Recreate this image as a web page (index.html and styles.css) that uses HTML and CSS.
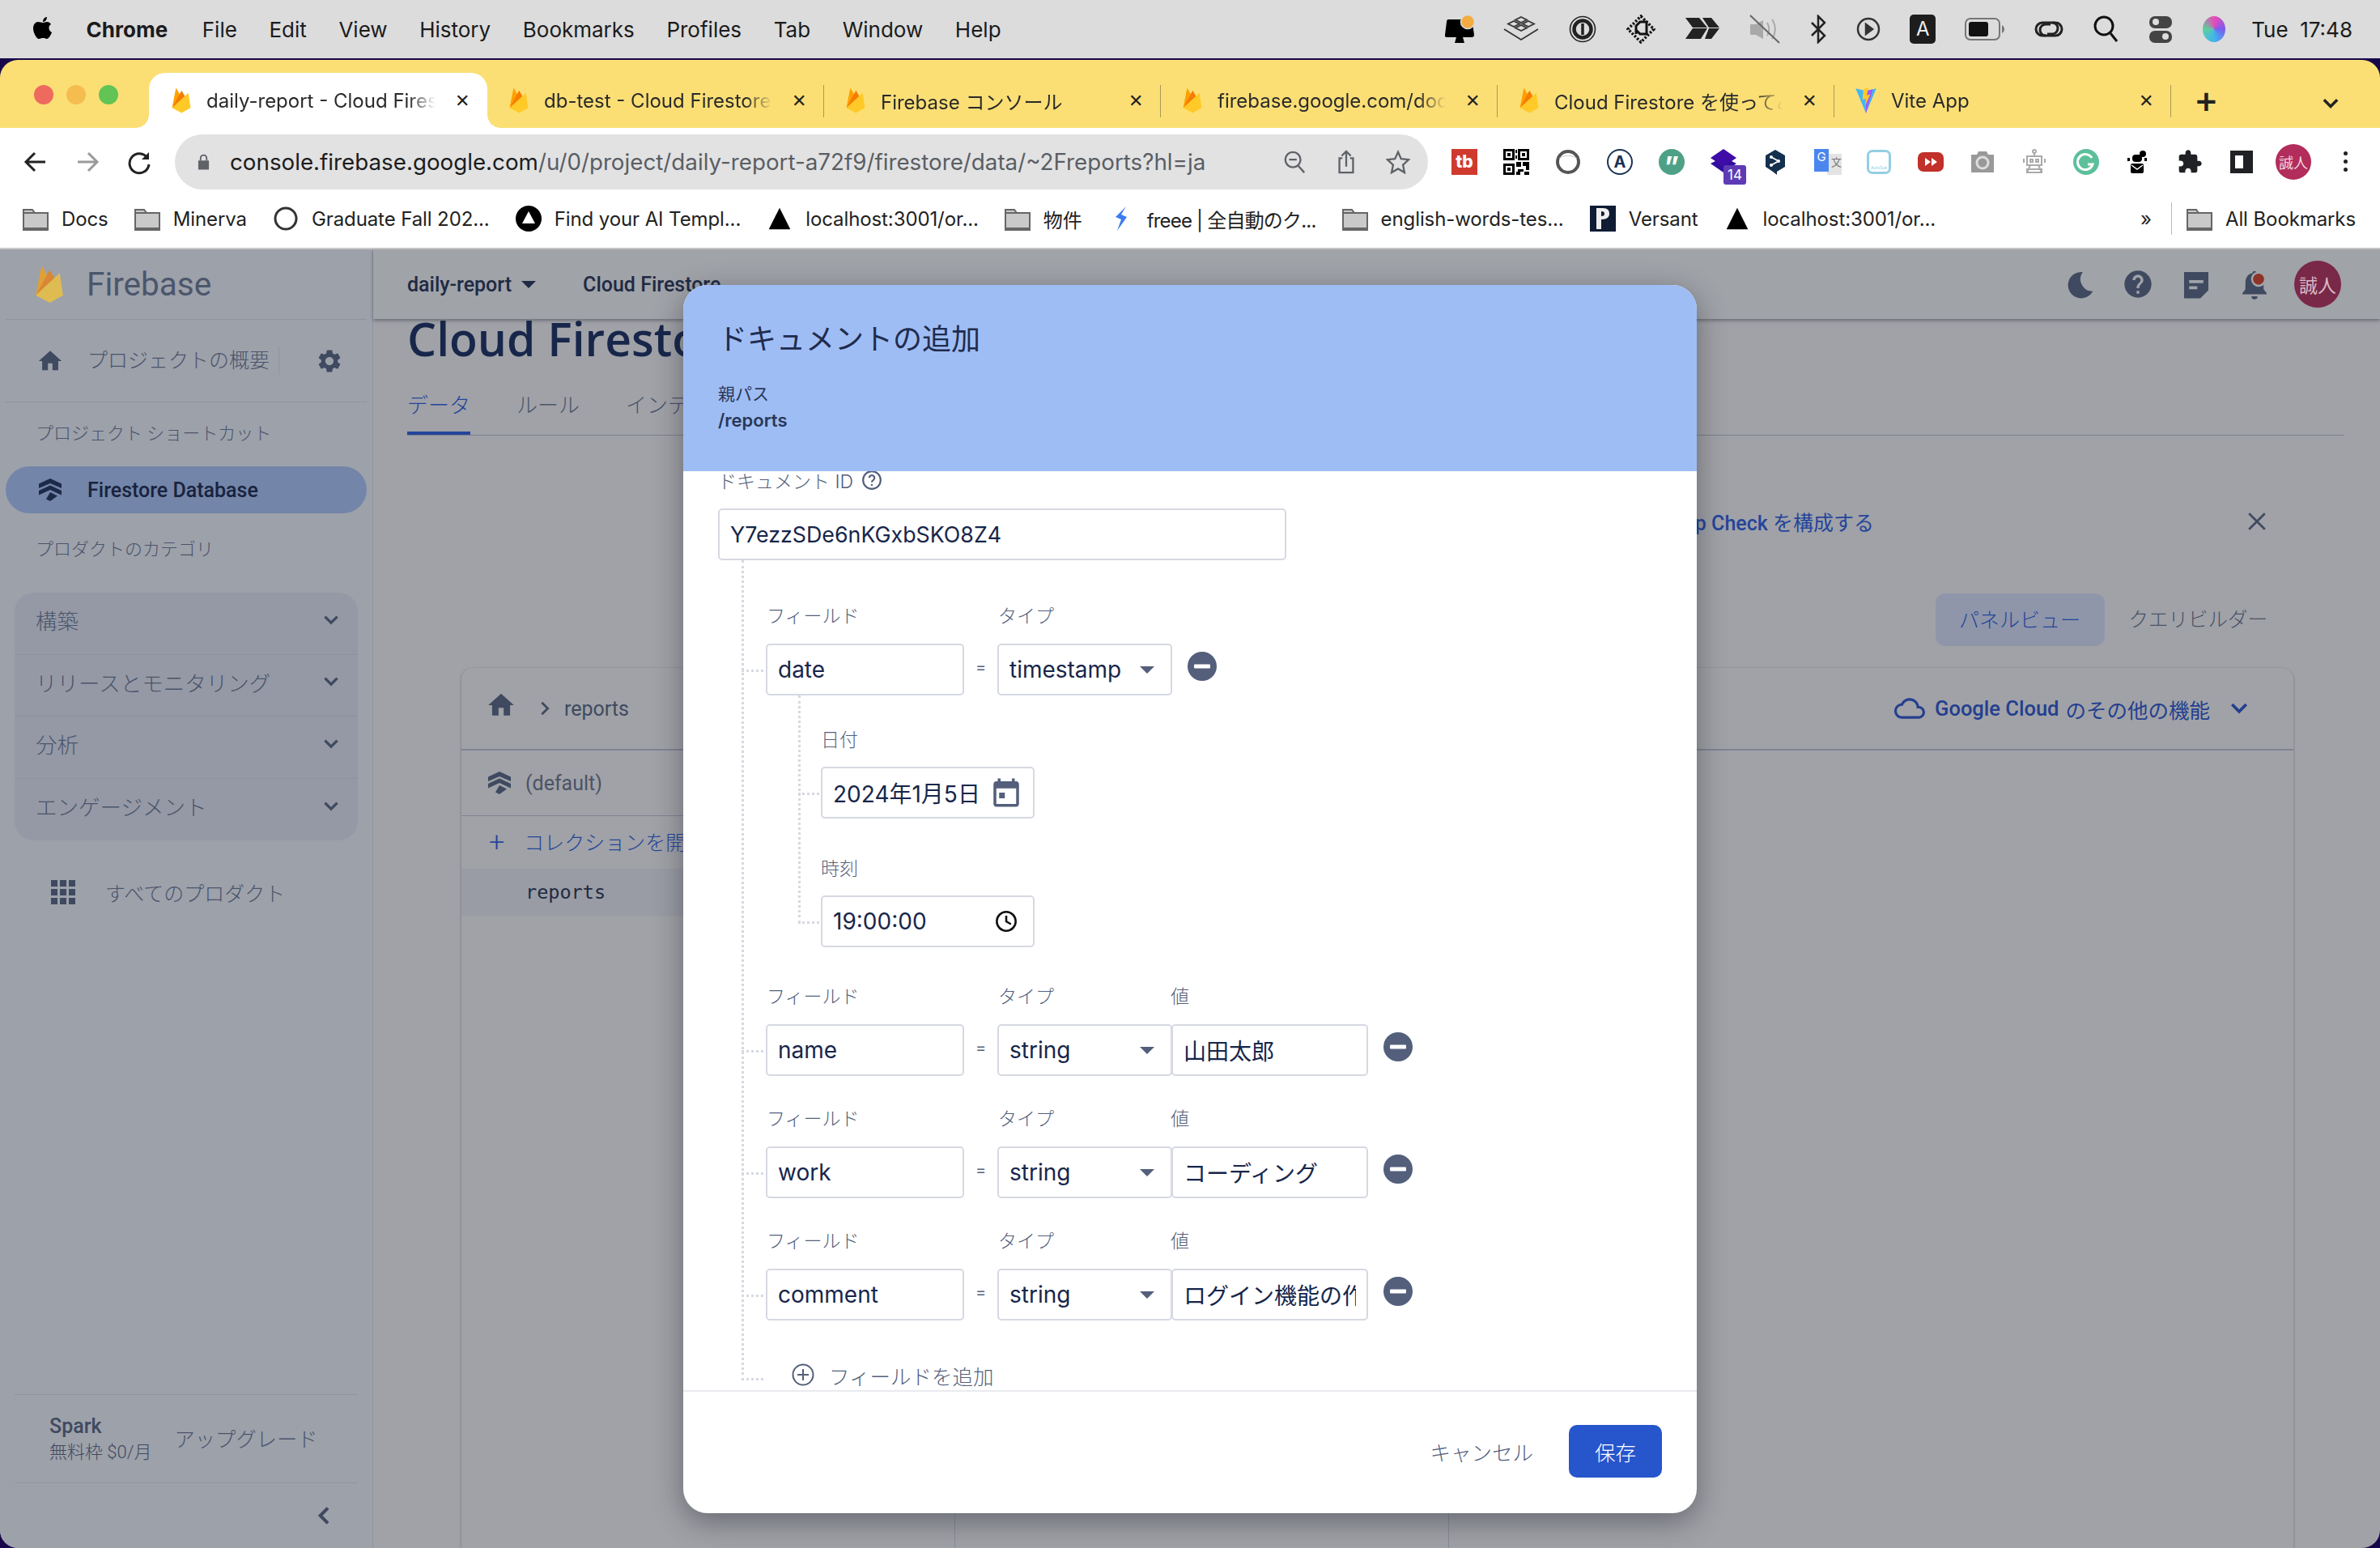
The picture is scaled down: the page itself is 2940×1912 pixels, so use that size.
FILE: index.html
```html
<!DOCTYPE html>
<html lang="ja">
<head>
    <meta charset="UTF-8">
    <title>Cloud Firestore</title>
    <link rel="stylesheet" href="styles.css">
</head>
<body>
<svg class="defs" width="0" height="0">
    <symbol id="flame" viewBox="12 10 37 49"><path fill="#ffa000" d="M14 48 21 12l8 14z"/><path fill="#f57c00" d="M14 48 31 17l8 14z"/><path fill="#ffca28" d="M14 48 43 21l4 27-16 9z"/></symbol>
    <symbol id="folder" viewBox="0 0 32 30"><path fill="#c9c9c9" stroke="#666" stroke-width="2" d="M1 4h11l3 4h16v21H1z"/><path fill="none" stroke="#666" stroke-width="2" d="M1 8h14"/><path fill="#666" d="M1 26h30v3H1z"/></symbol>
    <symbol id="home" viewBox="0 0 24 24"><path d="M10 20v-6h4v6h5v-8h3L12 3 2 12h3v8z"/></symbol>
    <symbol id="gear" viewBox="0 0 24 24"><path d="M19.14 12.94c.04-.3.06-.61.06-.94 0-.32-.02-.64-.07-.94l2.03-1.58c.18-.14.23-.41.12-.61l-1.92-3.32c-.12-.22-.37-.29-.59-.22l-2.39.96c-.5-.38-1.03-.7-1.62-.94l-.36-2.54c-.04-.24-.24-.41-.48-.41h-3.84c-.24 0-.43.17-.47.41l-.36 2.54c-.59.24-1.13.57-1.62.94l-2.39-.96c-.22-.08-.47 0-.59.22L2.74 8.87c-.12.21-.08.47.12.61l2.03 1.58c-.05.3-.09.63-.09.94s.02.64.07.94l-2.03 1.58c-.18.14-.23.41-.12.61l1.92 3.32c.12.22.37.29.59.22l2.39-.96c.5.38 1.03.7 1.62.94l.36 2.54c.05.24.24.41.48.41h3.84c.24 0 .44-.17.47-.41l.36-2.54c.59-.24 1.13-.56 1.62-.94l2.39.96c.22.08.47 0 .59-.22l1.92-3.32c.12-.22.07-.47-.12-.61l-2.01-1.58zM12 15.6c-1.98 0-3.6-1.62-3.6-3.6s1.62-3.6 3.6-3.6 3.6 1.62 3.6 3.6-1.62 3.6-3.6 3.6z"/></symbol>
    <symbol id="firestore" viewBox="0 0 28 28"><path d="M14 0 28 6.500v5.500L14 6 0 12V6.500z"/><path d="M14 8.500 28 15v5.500L14 14 0 20.500V15z"/><path d="M14 17l9 4.500-9 6.500-5-2.500z"/></symbol>
    <symbol id="chev" viewBox="0 0 24 24"><path fill="none" stroke="currentColor" stroke-width="3" d="M5 8l7 7 7-7"/></symbol>
    <symbol id="minus" viewBox="0 0 36 36"><circle cx="18" cy="18" r="18" fill="#535f7b"/><rect x="8" y="15.500" width="20" height="5" rx="1" fill="#fff"/></symbol>
    <symbol id="tri" viewBox="0 0 24 24"><path d="M12 2 22 22H2z"/></symbol>
</svg>

<div class="menubar">
    <svg class="apple" viewBox="0 0 24 28"><path d="M17 1c0 3-2 6-5 6 0-3 2-6 5-6zM12 8c2 0 3-1 5-1 2 0 4 1 5 3-4 2-3 8 1 10-1 3-4 8-6 8-2 0-2-1-5-1s-3 1-5 1C4 28 0 20 0 15c0-5 3-8 6-8 2 0 4 1 6 1z"/></svg>
    <b class="menu-app">Chrome</b>
    <span>File</span><span>Edit</span><span>View</span><span>History</span><span>Bookmarks</span><span>Profiles</span><span>Tab</span><span>Window</span><span>Help</span>
    <div class="status">
        <svg width="36" height="36" viewBox="0 0 36 36"><path d="M4 6h26c2 0 4 2 4 5l2 14c0 2-1 3-3 3H2c-2 0-2-1-2-3L2 9c0-2 1-3 2-3z"/><path d="M14 28h8l2 7H12z"/><circle cx="28" cy="9" r="8.500" fill="#f4ab42" stroke="#dcdcdc" stroke-width="1.500"/></svg>
        <svg width="44" height="36" viewBox="0 0 44 36" fill="none" stroke="#333" stroke-width="1.800"><path d="M22 3l7 3.500-7 3.500-7-3.500zM13 8l7 3.500-7 3.500-7-3.500zM31 8l7 3.500-7 3.500-7-3.500zM22 13l7 3.500-7 3.500-7-3.500zM1 18l21 13 21-13"/></svg>
        <svg width="36" height="36" viewBox="0 0 36 36" fill="none" stroke="#222"><circle cx="18" cy="18" r="15.500" stroke-width="1.600"/><circle cx="18" cy="18" r="10.500" stroke-width="4.500"/><path d="M18 11v14" stroke-width="3.500"/></svg>
        <svg width="36" height="36" viewBox="0 0 36 36" fill="none" stroke="#111"><path d="M18 2 34 18 18 34 2 18z" stroke-width="3.500" stroke-dasharray="2.500 2"/><path d="M12 24V14l5-5h8v15h-8l-5-5" stroke-width="3"/></svg>
        <svg width="44" height="36" viewBox="0 -4 42 36" fill="#222"><path d="M0 0h17l10 12H9zM21 0h11l10 12H29zM0 26l9-13h18l-8 13zM24 26l5-13h13l-10 13z"/></svg>
        <svg width="38" height="36" viewBox="0 0 38 36"><path fill="#a9a9a9" d="M1 12h7l9-5v23l-9-5H1z"/><path fill="none" stroke="#a9a9a9" stroke-width="2" d="M22 10c3 5 3 12 0 16M28 6c5 7 5 17 0 24"/><path stroke="#666" stroke-width="2" d="M1 1l36 34"/></svg>
        <svg width="22" height="36" viewBox="0 0 22 36" fill="none" stroke="#222" stroke-width="2.500"><path d="M3 10l16 16-8 8V2l8 8L3 26"/></svg>
        <svg width="30" height="36" viewBox="0 0 30 36" fill="none" stroke="#333" stroke-width="2.500"><circle cx="15" cy="18" r="13"/><path d="M12 12l8 6-8 6z" fill="#333"/></svg>
        <span class="status-a">A</span>
        <svg width="50" height="30" viewBox="0 0 50 30"><rect x="1" y="2" width="42" height="26" rx="6" fill="none" stroke="#777" stroke-width="2"/><rect x="5" y="6" width="24" height="18" rx="3" fill="#111"/><path d="M46 10c2 1 3 3 3 5s-1 4-3 5z" fill="#777"/></svg>
        <svg width="36" height="36" viewBox="0 0 36 36" fill="none" stroke="#222" stroke-width="3"><path d="M14 26H10a8 8 0 0 1 0-16h12a7 7 0 0 1 0 14h-6"/><path d="M22 10h4a8 8 0 0 1 0 16H14a7 7 0 0 1 0-14h6"/></svg>
        <svg width="32" height="36" viewBox="0 0 32 36" fill="none" stroke="#111" stroke-width="3"><circle cx="14" cy="14" r="11"/><path d="M22 23l8 10"/></svg>
        <svg width="32" height="36" viewBox="0 0 32 36"><rect x="2" y="2" width="28" height="15" rx="7" fill="#444"/><circle cx="10" cy="9" r="4" fill="#ddd"/><rect x="2" y="20" width="28" height="15" rx="7" fill="#444"/><circle cx="22" cy="27" r="4" fill="#ddd"/></svg>
        <span class="siri"></span>
        <span class="clock">Tue&nbsp; 17:48</span>
    </div>
</div>

<div class="window">
    <div class="tabstrip">
        <div class="lights"><i class="red"></i><i class="amber"></i><i class="green"></i></div>
        <div class="tab active"><svg class="favicon"><use href="#flame"/></svg><span class="tab-title">daily-report - Cloud Firestore</span><span class="tab-x">✕</span></div>
        <div class="tab"><svg class="favicon"><use href="#flame"/></svg><span class="tab-title">db-test - Cloud Firestore</span><span class="tab-x">✕</span></div>
        <div class="tab"><svg class="favicon"><use href="#flame"/></svg><span class="tab-title">Firebase コンソール</span><span class="tab-x">✕</span></div>
        <div class="tab"><svg class="favicon"><use href="#flame"/></svg><span class="tab-title">firebase.google.com/docs/firestore</span><span class="tab-x">✕</span></div>
        <div class="tab"><svg class="favicon"><use href="#flame"/></svg><span class="tab-title">Cloud Firestore を使ってみる</span><span class="tab-x">✕</span></div>
        <div class="tab"><svg class="favicon" viewBox="0 0 24 32"><path fill="#41b7f5" d="M0 2l12 3 12-3-12 29z"/><path fill="#a259f7" d="M12 5l8-2-8 28z"/><path fill="#ffc928" d="M15 1l-6 2-1 12 4-1-1 8 6-13-4 1z"/></svg><span class="tab-title">Vite App</span><span class="tab-x">✕</span></div>
        <span class="tab-plus">+</span>
        <svg class="tab-menu" viewBox="0 0 24 24"><use href="#chev"/></svg>
    </div>

    <div class="toolbar">
        <svg class="nav" viewBox="0 0 32 32" fill="none" stroke="#222" stroke-width="3"><path d="M28 16H5M15 5 4 16l11 11"/></svg>
        <svg class="nav" viewBox="0 0 32 32" fill="none" stroke="#9a9a9a" stroke-width="3"><path d="M4 16h23M17 5l11 11-11 11"/></svg>
        <svg class="nav" viewBox="0 0 32 32" fill="none" stroke="#222" stroke-width="3"><path d="M26 11a12 12 0 1 0 2 8"/><path d="M28 4v9H19z" fill="#222" stroke="none"/></svg>
        <div class="omnibox">
            <svg class="lock" viewBox="0 0 16 22"><path d="M1 9h14v12H1z" fill="#5f6368"/><path d="M4 9V6a4 4 0 0 1 8 0v3" fill="none" stroke="#5f6368" stroke-width="2"/></svg>
            <span class="url"><b>console.firebase.google.com</b>/u/0/project/daily-report-a72f9/firestore/data/~2Freports?hl=ja</span>
            <svg class="omni-icon" viewBox="0 0 32 32" fill="none" stroke="#5f6368" stroke-width="2.500"><circle cx="14" cy="13" r="10"/><path d="M21 21l8 9M9 13h10"/></svg>
            <svg class="omni-icon" viewBox="0 0 32 32" fill="none" stroke="#5f6368" stroke-width="2.500"><path d="M11 11H7v19h18V11h-4M16 22V3M10 8l6-6 6 6"/></svg>
            <svg class="omni-icon" viewBox="0 0 32 32" fill="none" stroke="#5f6368" stroke-width="2.500"><path d="M16 3l4 9 10 1-7.500 7 2 10-8.500-5-8.500 5 2-10L2 13l10-1z"/></svg>
        </div>
        <div class="extensions">
            <span class="ext ext-tb">tb</span>
            <svg class="ext" viewBox="0 0 32 32"><path d="M0 0h14v14H0zM18 0h14v14H18zM0 18h14v14H0zM3 3v8h8V3zM21 3v8h8V3zM3 21v8h8v-8zM5 5h4v4H5zM23 5h4v4h-4zM5 23h4v4H5zM15 1h2v4h-2zM15 8h2v4h-2zM16 16h6v6h-6zM24 16h8v5h-8zM28 21h4v5h-4zM18 25h7v3h-7zM16 28h5v4h-5zM26 28h6v4h-6z" fill-rule="evenodd"/></svg>
            <svg class="ext" viewBox="0 0 32 32" fill="none" stroke="#555" stroke-width="4"><circle cx="16" cy="16" r="13"/><path d="M5 12c6-5 16-5 22 0" stroke="#ccc" stroke-width="1"/></svg>
            <span class="ext ext-ring">A</span>
            <span class="ext ext-quote">”</span>
            <span class="ext ext-badge"><svg viewBox="0 0 32 32"><path fill="#2f0e9e" d="M0 18l16-8 16 8-16 11z"/><path fill="#3f0ca8" d="M16 0l16 11-16 11L0 11z"/></svg><em>14</em></span>
            <svg class="ext" viewBox="0 0 32 32"><path fill="#14304f" d="M16 1l12 7v14l-10 6v4l-5-4-9-6V8z"/><path fill="none" stroke="#fff" stroke-width="1.800" d="M11 10l9 5-9 5"/><circle cx="11" cy="10" r="2" fill="#fff"/><circle cx="20" cy="15" r="2" fill="#fff"/><circle cx="11" cy="20" r="2" fill="#fff"/></svg>
            <span class="ext ext-gt"><i>G</i><b>文</b></span>
            <span class="ext ext-box">AutoSub</span>
            <svg class="ext" viewBox="0 0 32 32"><rect y="4" width="32" height="24" rx="7" fill="#c1302a"/><path fill="#fff" d="M9 11l7 5-7 5zM17 11l7 5-7 5z"/></svg>
            <svg class="ext" viewBox="0 0 32 32"><path fill="#999" d="M2 7h7l2-4h10l2 4h7v22H2z"/><circle cx="16" cy="17" r="7" fill="none" stroke="#ddd" stroke-width="3"/></svg>
            <svg class="ext" viewBox="0 0 32 32" fill="none" stroke="#aaa" stroke-width="2"><circle cx="16" cy="3" r="2"/><path d="M16 5v4M7 9h18v11H7zM3 12v5M29 12v5M11 20l-4 9M21 20l4 9M7 25h18v4H7zM11 13h3v3h-3zM18 13h3v3h-3z"/></svg>
            <svg class="ext" viewBox="0 0 32 32"><circle cx="16" cy="16" r="16" fill="#5cc09b"/><path fill="none" stroke="#fff" stroke-width="3" d="M23 11a9.500 9.500 0 1 0 1 8h-6"/></svg>
            <svg class="ext" viewBox="0 0 32 32"><circle cx="22" cy="6" r="4"/><path d="M17 9l-2 3 4-1z"/><path d="M15 4v4"/><rect x="9" y="7" width="12" height="9" rx="4"/><rect x="7" y="18" width="16" height="12" rx="2"/><path fill="none" stroke="#fff" stroke-width="1.500" d="M8 20l7 5 7-5"/><path d="M3 11h3v4H3zM24 11h3v4h-3z"/></svg>
            <svg class="ext" viewBox="0 0 24 24" fill="#202124"><path d="M20.500 11H19V7c0-1.100-.9-2-2-2h-4V3.500C13 2.120 11.880 1 10.500 1S8 2.120 8 3.500V5H4c-1.100 0-1.990.9-1.990 2v3.800H3.500c1.490 0 2.700 1.210 2.700 2.700s-1.210 2.700-2.700 2.700H2V20c0 1.100.9 2 2 2h3.800v-1.500c0-1.490 1.210-2.700 2.700-2.700 1.490 0 2.700 1.210 2.700 2.700V22H17c1.100 0 2-.9 2-2v-4h1.500c1.380 0 2.500-1.120 2.500-2.500S21.880 11 20.500 11z"/></svg>
            <span class="ext ext-side"></span>
            <span class="ext ext-avatar">誠人</span>
            <span class="ext ext-more"><i></i><i></i><i></i></span>
        </div>
    </div>

    <div class="bookmarks">
        <span class="mark"><svg><use href="#folder"/></svg>Docs</span>
        <span class="mark"><svg><use href="#folder"/></svg>Minerva</span>
        <span class="mark"><svg viewBox="0 0 32 32" fill="none" stroke="#333" stroke-width="3"><circle cx="16" cy="16" r="13"/></svg>Graduate Fall 202...</span>
        <span class="mark"><svg viewBox="0 0 32 32"><circle cx="16" cy="16" r="16"/><path fill="#fff" d="M16 7l8 15H8z"/></svg>Find your AI Templ...</span>
        <span class="mark"><svg><use href="#tri"/></svg>localhost:3001/or...</span>
        <span class="mark"><svg><use href="#folder"/></svg>物件</span>
        <span class="mark mark-tight"><svg viewBox="0 0 32 32"><path fill="#3d7cf0" d="M22 1 9 14l7 3-5 14 12-17-7-3z"/></svg>freee | 全自動のク...</span>
        <span class="mark"><svg><use href="#folder"/></svg>english-words-tes...</span>
        <span class="mark"><svg viewBox="0 0 32 32"><path fill="#0f1c33" d="M0 0h32v32H0z"/><path fill="#eee" d="M8 3h8c6 0 8 3 8 7s-3 7-9 7h-1v12H8zm6 4v6c3 0 4-1 4-3s-1-3-4-3z"/></svg>Versant</span>
        <span class="mark"><svg><use href="#tri"/></svg>localhost:3001/or...</span>
        <span class="mark-more">»</span>
        <span class="mark mark-all"><svg><use href="#folder"/></svg>All Bookmarks</span>
    </div>

    <div class="page">
        <aside class="sidebar">
            <div class="brand"><svg class="brand-logo"><use href="#flame"/></svg><span>Firebase</span></div>
            <div class="overview">
                <svg class="side-icon"><use href="#home"/></svg>
                <span class="overview-label">プロジェクトの概要</span>
                <svg class="gear"><use href="#gear"/></svg>
            </div>
            <div class="side-head first">プロジェクト ショートカット</div>
            <div class="pill"><svg class="side-icon-sm"><use href="#firestore"/></svg>Firestore Database</div>
            <div class="side-head">プロダクトのカテゴリ</div>
            <div class="group">
                <div class="group-row">構築<svg><use href="#chev"/></svg></div>
                <div class="group-row">リリースとモニタリング<svg><use href="#chev"/></svg></div>
                <div class="group-row">分析<svg><use href="#chev"/></svg></div>
                <div class="group-row">エンゲージメント<svg><use href="#chev"/></svg></div>
            </div>
            <div class="all-products">
                <span class="apps"><i></i><i></i><i></i><i></i><i></i><i></i><i></i><i></i><i></i></span>
                すべてのプロダクト
            </div>
            <div class="plan">
                <div class="plan-name"><b>Spark</b><span>無料枠 $0/月</span></div>
                <span class="upgrade">アップグレード</span>
            </div>
            <div class="collapse"><svg viewBox="0 0 24 24" fill="none" stroke="#3f4a60" stroke-width="3"><path d="M15 5l-7 7 7 7"/></svg></div>
        </aside>

        <main class="main">
            <div class="topbar">
                <b class="crumb">daily-report</b><i class="caret"></i>
                <b class="crumb crumb-2">Cloud Firestore</b>
                <div class="top-icons">
                    <svg viewBox="0 0 32 32"><path d="M19 4a13 13 0 1 0 10 19A12 12 0 0 1 19 4z"/></svg>
                    <svg viewBox="0 0 24 24"><path d="M12 2C6.480 2 2 6.480 2 12s4.480 10 10 10 10-4.480 10-10S17.520 2 12 2zm1 17h-2v-2h2v2zm2.070-7.750l-.9.920C13.450 12.900 13 13.500 13 15h-2v-.5c0-1.100.450-2.100 1.170-2.830l1.240-1.260c.37-.36.590-.86.590-1.410 0-1.100-.9-2-2-2s-2 .9-2 2H8c0-2.210 1.790-4 4-4s4 1.790 4 4c0 .88-.36 1.680-.93 2.250z"/></svg>
                    <svg viewBox="0 0 32 32"><path d="M4 4h24v18l-8 8H4zm5 8v3h14v-3zm0 6v3h8v-3z" fill-rule="evenodd"/></svg>
                    <svg viewBox="0 0 32 32"><path d="M16 3c1 0 2 1 2 2 5 1 7 5 7 10v6l3 4v1H4v-1l3-4v-6c0-5 2-9 7-10 0-1 1-2 2-2zM13 28h6c0 2-1 3-3 3s-3-1-3-3z"/><circle cx="20" cy="11" r="7.500" fill="#a0a3a8"/><circle cx="20" cy="11" r="5.500" fill="#8f3328"/></svg>
                    <span class="top-avatar">誠人</span>
                </div>
            </div>
            <div class="content">
                <h1>Cloud Firestore</h1>
                <div class="tabs">
                    <span class="tabs-item selected">データ</span>
                    <span class="tabs-item">ルール</span>
                    <span class="tabs-item">インデックス</span>
                </div>
                <div class="notice">
                    <span class="notice-text"><b>App Check</b> を構成する</span>
                    <svg viewBox="0 0 24 24" fill="none" stroke="#3f4a60" stroke-width="2.500"><path d="M3 3l18 18M21 3 3 21"/></svg>
                </div>
                <div class="views">
                    <span class="view on">パネルビュー</span>
                    <span class="view">クエリビルダー</span>
                </div>
                <section class="panel">
                    <div class="panel-head">
                        <svg class="crumb-home"><use href="#home"/></svg>
                        <svg class="crumb-gt" viewBox="0 0 24 24" fill="none" stroke="#3f4a60" stroke-width="3"><path d="M8 4l8 8-8 8"/></svg>
                        <span>reports</span>
                        <div class="cloud-link">
                            <svg viewBox="0 0 24 24" fill="#243f8f"><path d="M19.350 10.040C18.670 6.590 15.640 4 12 4 9.110 4 6.600 5.640 5.350 8.040 2.340 8.360 0 10.910 0 14c0 3.310 2.690 6 6 6h13c2.760 0 5-2.240 5-5 0-2.640-2.050-4.780-4.650-4.960zM19 18H6c-2.210 0-4-1.790-4-4s1.790-4 4-4h.71C7.370 7.690 9.480 6 12 6c3.040 0 5.500 2.460 5.500 5.500v.5H19c1.660 0 3 1.340 3 3s-1.340 3-3 3z"/></svg>
                            <b>Google Cloud</b> のその他の機能
                            <svg class="cloud-chev"><use href="#chev"/></svg>
                        </div>
                    </div>
                    <div class="panel-cols">
                        <div class="col">
                            <div class="col-head"><svg class="side-icon-sm"><use href="#firestore"/></svg>(default)</div>
                            <div class="col-add"><span class="plus">+</span>コレクションを開始</div>
                            <div class="col-item">reports</div>
                        </div>
                        <div class="col"></div>
                        <div class="col col-wide"></div>
                    </div>
                </section>
            </div>
        </main>

        <div class="dialog">
            <header class="dialog-head">
                <h2>ドキュメントの追加</h2>
                <div class="parent-label">親パス</div>
                <div class="parent-path">/reports</div>
            </header>
            <div class="dialog-body">
                <div class="id-label">ドキュメント ID
                    <svg viewBox="0 0 24 24" fill="none" stroke="#535f7b" stroke-width="2"><circle cx="12" cy="12" r="10"/><path d="M9 9.500a3 3 0 1 1 4.500 2.600c-1 .6-1.500 1.200-1.500 2.400M12 16.500v2"/></svg>
                </div>
                <div class="box box-id">Y7ezzSDe6nKGxbSKO8Z4</div>
                <div class="tree">
                    <div class="row-labels"><span class="lab-field">フィールド</span><span class="lab-type">タイプ</span></div>
                    <div class="row tick">
                        <div class="box box-field">date</div><span class="eq">=</span>
                        <div class="box box-type">timestamp<i class="caret"></i></div>
                        <svg class="remove"><use href="#minus"/></svg>
                    </div>
                    <div class="subtree">
                        <div class="sub-label">日付</div>
                        <div class="box box-sub tick">2024年1月5日
                            <svg class="box-icon" viewBox="0 0 24 24" fill="#535f7b"><path d="M19 4h-1V2h-2v2H8V2H6v2H5c-1.100 0-2 .9-2 2v14c0 1.100.9 2 2 2h14c1.100 0 2-.9 2-2V6c0-1.100-.9-2-2-2zm0 16H5V9h14v11zM7 12h4v4H7z"/></svg>
                        </div>
                        <div class="sub-label time-label">時刻</div>
                        <div class="box box-sub tick">19:00:00
                            <svg class="box-icon clock-icon" viewBox="0 0 24 24" fill="none" stroke="#111" stroke-width="2.200"><circle cx="12" cy="12" r="10"/><path d="M12 6v6l5 3"/></svg>
                        </div>
                    </div>
                    <div class="row-labels"><span class="lab-field">フィールド</span><span class="lab-type">タイプ</span><span>値</span></div>
                    <div class="row tick">
                        <div class="box box-field">name</div><span class="eq">=</span>
                        <div class="box box-type">string<i class="caret"></i></div>
                        <div class="box box-value">山田太郎</div>
                        <svg class="remove"><use href="#minus"/></svg>
                    </div>
                    <div class="row-labels"><span class="lab-field">フィールド</span><span class="lab-type">タイプ</span><span>値</span></div>
                    <div class="row tick">
                        <div class="box box-field">work</div><span class="eq">=</span>
                        <div class="box box-type">string<i class="caret"></i></div>
                        <div class="box box-value">コーディング</div>
                        <svg class="remove"><use href="#minus"/></svg>
                    </div>
                    <div class="row-labels"><span class="lab-field">フィールド</span><span class="lab-type">タイプ</span><span>値</span></div>
                    <div class="row tick">
                        <div class="box box-field">comment</div><span class="eq">=</span>
                        <div class="box box-type">string<i class="caret"></i></div>
                        <div class="box box-value"><span class="clip">ログイン機能の作成</span></div>
                        <svg class="remove"><use href="#minus"/></svg>
                    </div>
                    <div class="add-field">
                        <svg viewBox="0 0 28 28" fill="none" stroke="#535f7b" stroke-width="2"><circle cx="14" cy="14" r="12.500"/><path d="M14 7v14M7 14h14"/></svg>
                        フィールドを追加
                    </div>
                </div>
            </div>
            <footer class="dialog-foot">
                <span class="cancel">キャンセル</span>
                <span class="save">保存</span>
            </footer>
        </div>
    </div>
</div>
</body>
</html>
```

FILE: styles.css
```css
html, body {
    margin: 0;
    height: 1912px;
    overflow: hidden;
}

body {
    background: #17074a;
    font-family: "Inter", "Noto Sans CJK JP", sans-serif;
    color: #222;
}

.defs {
    position: absolute;
}

/* mac menu bar */
.menubar {
    height: 72px;
    display: flex;
    align-items: center;
    gap: 39.600px;
    padding-left: 41px;
    margin-bottom: 2px;
    background: #dcdcdc;
    font-size: 26px;
    color: #1b1b1b;
}

.apple {
    width: 24px;
    height: 30px;
    margin-top: -4px;
    margin-right: 2px;
}

.menu-app {
    font-weight: 700;
    margin-right: 3px;
}

.status {
    margin-left: auto;
    display: flex;
    align-items: center;
    gap: 36px;
    padding-right: 34px;
}

.status-a {
    width: 32px;
    height: 36px;
    border-radius: 5px;
    background: #1d1d1d;
    color: #eee;
    font-size: 24px;
    text-align: center;
    line-height: 36px;
}

.siri {
    width: 28px;
    height: 32px;
    border-radius: 50%;
    background: conic-gradient(#e94bb5, #7a5cf0, #3fb6ee, #5bd0a0, #e94bb5);
}

.clock {
    margin-left: -4px;
}

/* browser window */
.window {
    height: 1838px;
    display: flex;
    flex-direction: column;
    border-radius: 22px;
    overflow: hidden;
}

.tabstrip {
    height: 84px;
    display: flex;
    align-items: flex-end;
    background: #fbdf75;
    font-size: 24px;
    position: relative;
}

.lights {
    width: 184px;
    height: 68px;
    display: flex;
    gap: 16px;
    padding: 15px 0 0 42px;
    box-sizing: border-box;
}

.lights i {
    width: 24px;
    height: 24px;
    border-radius: 50%;
}

.red { background: #ee6a5f; }
.amber { background: #f5bd4f; }
.green { background: #61c454; }

.tab {
    width: 416px;
    height: 68px;
    box-sizing: border-box;
    padding: 0 20px 0 26px;
    display: flex;
    align-items: center;
    gap: 18px;
    position: relative;
    color: #2a2a2a;
}

.tab::after {
    content: "";
    position: absolute;
    right: 0;
    top: 15px;
    height: 40px;
    width: 1px;
    background: #a89a55;
}

.tab.active {
    width: 418px;
    padding-left: 27px;
    background: #fff;
    border-radius: 20px 20px 0 0;
}

/* flared foot of the active tab */
.tab.active::before,
.tab.active::after {
    content: "";
    display: block;
    position: absolute;
    top: auto;
    bottom: 0;
    width: 16px;
    height: 16px;
    background: radial-gradient(circle at 0 0, transparent 15.500px, #fff 16px);
}

.tab.active::before {
    left: -16px;
}

.tab.active::after {
    right: -16px;
    background: radial-gradient(circle at 100% 0, transparent 15.500px, #fff 16px);
}

.favicon {
    width: 26px;
    height: 34px;
    flex: none;
}

.tab-title {
    flex: 1;
    white-space: nowrap;
    overflow: hidden;
    -webkit-mask-image: linear-gradient(to right, #000 88%, transparent 100%);
    mask-image: linear-gradient(to right, #000 88%, transparent 100%);
}

.tab-x {
    font-size: 22px;
    width: 22px;
    margin-left: 4px;
    text-align: center;
    color: #222;
}

.tab-plus {
    align-self: center;
    margin: 12px 0 0 28px;
    font-size: 46px;
    font-weight: 500;
    line-height: 1;
    color: #222;
}

.tab-menu {
    width: 28px;
    height: 28px;
    color: #222;
    position: absolute;
    right: 47px;
    top: 40px;
}

.toolbar {
    height: 76px;
    box-sizing: border-box;
    padding: 7px 0 0 28px;
    display: flex;
    align-items: center;
    background: #fff;
}

.nav {
    width: 32px;
    height: 32px;
    margin-right: 32px;
}

.omnibox {
    width: 1548px;
    height: 68px;
    margin-left: -4px;
    border-radius: 34px;
    background: #e2e2e3;
    display: flex;
    align-items: center;
    box-sizing: border-box;
    padding: 0 22px 0 28px;
}

.lock {
    width: 15px;
    height: 22px;
    margin-right: 25px;
}

.url {
    flex: 1;
    font-size: 27.750px;
    color: #5a5e63;
    white-space: nowrap;
    overflow: hidden;
}

.url b {
    font-weight: 400;
    color: #1c1c1c;
}

.omni-icon {
    width: 30px;
    height: 30px;
    margin-left: 34px;
}

.extensions {
    display: flex;
    align-items: center;
    gap: 24px;
    margin-left: 25px;
}

.ext {
    width: 40px;
    height: 40px;
    display: flex;
    align-items: center;
    justify-content: center;
    flex: none;
    position: relative;
    box-sizing: border-box;
}

.extensions svg.ext {
    padding: 4px;
}

.ext-tb {
    width: 32px;
    height: 32px;
    margin: 0 4px;
    background: #d03a2e;
    color: #fff;
    font-weight: 800;
    font-size: 21px;
}

.ext-ring {
    width: 32px;
    height: 32px;
    margin: 0 4px;
    border: 2px solid #1a3355;
    border-radius: 50%;
    color: #1a3355;
    font-size: 20px;
    font-weight: 700;
}

.ext-quote {
    width: 32px;
    height: 32px;
    margin: 0 4px;
    border-radius: 50%;
    background: #4ea186;
    color: #fff;
    font-size: 34px;
    font-weight: 700;
    line-height: 44px;
    align-items: flex-start;
}

.ext-badge svg {
    width: 32px;
    height: 32px;
}

.ext-badge em {
    position: absolute;
    right: -8px;
    bottom: -8px;
    width: 28px;
    height: 24px;
    border-radius: 3px;
    background: #5e3bb5;
    color: #fff;
    font-size: 17px;
    font-style: normal;
    text-align: center;
    line-height: 24px;
}

.ext-gt i {
    position: absolute;
    left: 4px;
    top: 4px;
    width: 18px;
    height: 28px;
    background: #4b86ee;
    color: #fff;
    font-size: 15px;
    font-style: normal;
    text-align: center;
    z-index: 1;
}

.ext-gt b {
    position: absolute;
    right: 2px;
    top: 10px;
    width: 18px;
    height: 26px;
    background: #e3e3e3;
    color: #777;
    font-size: 13px;
    font-weight: 400;
    text-align: right;
}

.ext-box {
    width: 30px;
    height: 30px;
    margin: 0 5px;
    border: 3px solid #93cee2;
    border-radius: 7px;
    color: #93cee2;
    font-size: 5px;
    align-items: flex-end;
    padding-bottom: 2px;
}

.ext-side {
    width: 28px;
    height: 28px;
    margin: 0 6px;
    border: 6px solid #202124;
    border-right-width: 12px;
}

.ext-avatar {
    width: 44px;
    height: 44px;
    margin: 0 -2px;
    border-radius: 50%;
    background: #b22d5b;
    color: #f3d6e0;
    font-size: 18px;
}

.ext-more {
    flex-direction: column;
    gap: 5px;
}

.ext-more i {
    width: 5px;
    height: 5px;
    border-radius: 50%;
    background: #222;
}

.bookmarks {
    height: 72px;
    display: flex;
    align-items: center;
    gap: 32px;
    padding-left: 28px;
    background: #fff;
    border-bottom: 2px solid #c9c9c9;
    font-size: 24px;
    letter-spacing: -.1px;
    color: #222;
}

.mark {
    display: flex;
    align-items: center;
    gap: 16px;
    white-space: nowrap;
}

.mark-tight {
    letter-spacing: -.8px;
}

.mark svg {
    width: 32px;
    height: 32px;
    flex: none;
}

.mark-more {
    margin-left: auto;
    margin-right: 6px;
}

.mark-all {
    border-left: 1px solid #b9b9b9;
    height: 40px;
    padding-left: 18px;
    padding-right: 30px;
    margin-left: -14px;
}

/* page behind the dialog, already dimmed by the scrim */
.page {
    flex: 1;
    display: flex;
    position: relative;
    min-height: 0;
    background: #a0a2a7;
    font-family: "Roboto", "Noto Sans CJK JP", sans-serif;
    color: #3f4a60;
}

.sidebar {
    width: 461px;
    flex: none;
    background: #9da1aa;
    border-right: 1px solid #90939d;
    box-sizing: border-box;
    display: flex;
    flex-direction: column;
    padding: 0 7px;
}

.brand {
    height: 86px;
    display: flex;
    align-items: center;
    gap: 27px;
    padding-left: 35px;
    border-bottom: 1px solid #90949e;
    font-size: 40.500px;
    color: #4b566c;
}

.brand-logo {
    width: 38px;
    height: 50px;
    opacity: .68;
}

.overview {
    height: 101px;
    display: flex;
    align-items: center;
    padding-left: 38px;
    border-bottom: 1px solid #90949e;
    font-size: 25px;
    color: #4a556c;
    font-weight: 300;
}

.side-icon {
    width: 34px;
    height: 34px;
    fill: #3f4a60;
    margin-right: 29px;
}

.overview-label {
    height: 35px;
    line-height: 35px;
    padding-right: 11px;
    border-right: 1px solid #90949e;
}

.gear {
    width: 34px;
    height: 34px;
    fill: #3f4a60;
    margin-left: 45px;
}

.side-head {
    font-size: 22px;
    font-weight: 300;
    color: #4a556c;
    padding-left: 37px;
    height: 80px;
    line-height: 44px;
}

.side-head.first {
    padding-top: 17px;
    height: 62px;
}

.side-head:not(.first) {
    margin-top: 23px;
    height: 75px;
}

.pill {
    height: 58px;
    border-radius: 29px;
    background: #7385a8;
    display: flex;
    align-items: center;
    padding-left: 41px;
    font-size: 25px;
    font-weight: 500;
    color: #18233f;
    gap: 32px;
}

.side-icon-sm {
    width: 28px;
    height: 28px;
    fill: #1c2a4a;
    flex: none;
}

.group {
    margin: 0 11px;
    border-radius: 24px;
    background: #9599a5;
}

.group-row {
    height: 76.500px;
    box-sizing: border-box;
    display: flex;
    align-items: center;
    justify-content: space-between;
    padding: 0 20px 8px 26px;
    border-bottom: 1px solid #8d919e;
    font-size: 26.500px;
    font-weight: 300;
    color: #4a556c;
}

.group-row:last-child {
    border-bottom: 0;
}

.group-row svg {
    width: 26px;
    height: 26px;
    color: #3f4a60;
}

.all-products {
    display: flex;
    align-items: center;
    gap: 37px;
    margin-top: 46px;
    padding-left: 56px;
    font-size: 25px;
    font-weight: 300;
    color: #4a556c;
}

.apps {
    display: grid;
    grid-template-columns: repeat(3, 8px);
    gap: 3px;
}

.apps i {
    height: 8px;
    background: #3f4a60;
}

.plan {
    margin-top: auto;
    height: 108px;
    border-top: 1px solid #90949e;
    border-bottom: 1px solid #90949e;
    margin-left: 11px;
    margin-right: 11px;
    display: flex;
    align-items: center;
    padding-left: 43px;
    gap: 28px;
}

.plan-name {
    display: flex;
    flex-direction: column;
    margin-top: 2px;
    font-size: 22px;
    font-weight: 300;
    line-height: 32px;
}

.plan-name b {
    font-size: 25px;
    font-weight: 500;
}

.upgrade {
    font-size: 25.300px;
    font-weight: 300;
    color: #4a556c;
    margin-top: -3px;
}

.collapse {
    height: 80px;
    display: flex;
    align-items: center;
    justify-content: flex-end;
    padding-right: 36px;
}

.collapse svg {
    width: 32px;
    height: 32px;
}

.main {
    flex: 1;
    min-width: 0;
    display: flex;
    flex-direction: column;
    position: relative;
}

.topbar {
    height: 86px;
    flex: none;
    display: flex;
    align-items: center;
    padding-left: 42px;
    background: #a0a3a8;
    box-shadow: 0 2px 4px rgba(40, 44, 55, .45);
    position: relative;
    z-index: 1;
    font-size: 25px;
}

.crumb {
    font-weight: 500;
    color: #1f2a44;
}

.caret {
    display: inline-block;
    width: 0;
    height: 0;
    border-left: 9px solid transparent;
    border-right: 9px solid transparent;
    border-top: 9px solid #1f2a44;
    margin-left: 12px;
    flex: none;
}

.crumb-2 {
    margin-left: 58px;
}

.top-icons {
    margin-left: auto;
    display: flex;
    align-items: center;
    gap: 32px;
    padding-right: 48px;
}

.top-icons svg {
    width: 40px;
    height: 40px;
    fill: #3f4a60;
}

.top-avatar {
    width: 58px;
    height: 58px;
    margin-left: -3px;
    border-radius: 50%;
    background: #7a2848;
    color: #d7b9c4;
    font-size: 23px;
    display: flex;
    align-items: center;
    justify-content: center;
}

.content {
    flex: 1;
    min-height: 0;
    padding: 0 44px 0 42px;
    display: flex;
    flex-direction: column;
}

h1 {
    margin: -14px 0 0;
    height: 62px;
    font-family: "Open Sans", "Noto Sans CJK JP", sans-serif;
    font-size: 57px;
    font-weight: 600;
    line-height: 76px;
    color: #17264a;
}

.tabs {
    margin-top: 38px;
    height: 57px;
    display: flex;
    gap: 57px;
    border-bottom: 1px solid #7c8190;
    font-size: 26px;
    font-weight: 300;
    line-height: 42px;
    color: #4a556c;
}

.tabs-item {
    width: 78px;
    white-space: nowrap;
    position: relative;
}

.tabs-item.selected {
    color: #25459b;
    box-shadow: inset 0 -4px 0 #25459b;
}

.notice {
    height: 84px;
    margin-top: 64px;
    display: flex;
    align-items: center;
    justify-content: flex-end;
    padding-right: 95px;
    font-size: 25px;
    color: #25459b;
}

.notice b {
    font-weight: 500;
}

.notice svg {
    width: 26px;
    height: 26px;
    margin-left: 460px;
}

.views {
    margin-top: 47px;
    margin-right: 95px;
    height: 65px;
    display: flex;
    justify-content: flex-end;
    align-items: center;
    gap: 30px;
    font-size: 24.500px;
    font-weight: 300;
    color: #4a5368;
}

.view {
    padding-bottom: 4px;
}

.view.on {
    width: 209px;
    height: 65px;
    box-sizing: border-box;
    border-radius: 12px;
    background: #8f96aa;
    color: #25459b;
    font-size: 25px;
    display: flex;
    align-items: center;
    justify-content: center;
}

.panel {
    flex: 1;
    min-height: 0;
    margin: 27px 63px 0 67px;
    border-radius: 14px 14px 0 0;
    background: #a0a2a7;
    box-shadow: 0 1px 3px rgba(40, 44, 55, .45);
    display: flex;
    flex-direction: column;
    font-size: 25px;
}

.panel-head {
    height: 100px;
    flex: none;
    display: flex;
    align-items: center;
    padding-left: 30px;
    border-bottom: 2px solid #7f8493;
}

.crumb-home {
    width: 38px;
    height: 38px;
    fill: #3f4a60;
    margin-top: -8px;
}

.crumb-gt {
    width: 22px;
    height: 22px;
    margin: 0 13px 0 24px;
}

.cloud-link {
    margin-left: auto;
    display: flex;
    align-items: center;
    color: #243f8f;
    gap: 8px;
    padding-right: 52px;
    font-size: 25.500px;
}

.cloud-link svg {
    width: 38px;
    height: 38px;
    margin-right: 4px;
}

.cloud-link b {
    font-weight: 500;
}

.cloud-link .cloud-chev {
    width: 30px;
    height: 30px;
    margin: 0 0 0 13px;
    color: #243f8f;
}

.panel-cols {
    flex: 1;
    display: flex;
    min-height: 0;
}

.col {
    width: 610px;
    flex: none;
    border-right: 1px solid #888c99;
    box-sizing: border-box;
}

.col-wide {
    flex: 1;
    border-right: 0;
}

.col-head {
    height: 80px;
    display: flex;
    align-items: center;
    gap: 18px;
    padding-left: 33px;
    border-bottom: 1px solid #7f8493;
    color: #4a5368;
}

.col-head .side-icon-sm {
    fill: #3f4a60;
}

.col-add {
    height: 65px;
    box-sizing: border-box;
    padding: 0 0 4px 34px;
    display: flex;
    align-items: center;
    color: #25459b;
    font-size: 25px;
    font-weight: 300;
    gap: 24px;
}

.plus {
    font-size: 34px;
    line-height: 1;
}

.col-item {
    height: 58px;
    line-height: 58px;
    padding-left: 79px;
    background: #999ca4;
    font-family: "DejaVu Sans Mono", "Liberation Mono", monospace;
    font-size: 23.500px;
    color: #1f2a44;
}

/* add document dialog */
.dialog {
    position: absolute;
    z-index: 2;
    left: 844px;
    top: 44px;
    width: 1252px;
    height: 1517px;
    border-radius: 30px;
    background: #fff;
    box-shadow: 0 10px 36px rgba(30, 34, 45, .45);
    display: flex;
    flex-direction: column;
    overflow: hidden;
    font-family: "Inter", "Noto Sans CJK JP", sans-serif;
    color: #17264a;
}

.dialog-head {
    height: 230px;
    flex: none;
    box-sizing: border-box;
    padding: 44px 43px 0;
    background: #9fbdf5;
}

h2 {
    margin: 0 0 28px;
    font-size: 36px;
    font-weight: 400;
    line-height: 46px;
    color: #1f2c4d;
}

.parent-label {
    font-size: 21px;
    line-height: 33px;
    color: #2a3757;
}

.parent-path {
    font-size: 22px;
    font-weight: 600;
    line-height: 33px;
    color: #2a3757;
}

.dialog-body {
    height: 1135px;
    flex: none;
    overflow: hidden;
    padding-left: 43px;
    box-sizing: border-box;
}

.id-label {
    height: 30px;
    margin-top: -4px;
    display: flex;
    align-items: center;
    gap: 10px;
    font-size: 23px;
    font-weight: 300;
    color: #535f7b;
}

.id-label svg {
    width: 26px;
    height: 26px;
}

.box {
    height: 64px;
    box-sizing: border-box;
    border: 2px solid #d6d9e2;
    border-radius: 5px;
    display: flex;
    align-items: center;
    padding-left: 13px;
    font-size: 28px;
    color: #17264a;
    background: #fff;
    white-space: nowrap;
    position: relative;
}

.box-id {
    width: 702px;
    margin-top: 20px;
    font-size: 26.800px;
}

.tree {
    position: relative;
    margin-left: 29px;
    padding-left: 30px;
    padding-top: 54px;
}

.tree::before {
    content: "";
    position: absolute;
    left: 0;
    top: 0;
    bottom: 12px;
    border-left: 3px dotted #d6d9e2;
}

.row-labels {
    height: 30px;
    display: flex;
    font-size: 23px;
    font-weight: 300;
    line-height: 30px;
    color: #535f7b;
    margin-bottom: 19px;
}

.row + .row-labels {
    margin-top: 38px;
}

.subtree + .row-labels {
    margin-top: 46px;
}

.lab-field {
    width: 286px;
    padding-left: 1px;
    box-sizing: border-box;
}

.lab-type {
    width: 214px;
    padding-left: 1px;
    box-sizing: border-box;
}

.row {
    display: flex;
    align-items: center;
    position: relative;
}

/* the little dotted stub from the tree line to a field */
.tick::before {
    content: "";
    position: absolute;
    left: -30px;
    top: 50%;
    width: 27px;
    border-top: 3px dotted #d6d9e2;
}

.box-field {
    width: 245px;
}

.eq {
    width: 41px;
    text-align: center;
    font-size: 20px;
    color: #535f7b;
    margin-top: -6px;
}

.box-type {
    width: 216px;
    justify-content: space-between;
    padding-right: 20px;
}

.box-type .caret {
    border-top-color: #535f7b;
}

.box-value {
    width: 243px;
    margin-left: -1px;
}

.clip {
    display: block;
    overflow: hidden;
    width: 213px;
}

.remove {
    width: 36px;
    height: 36px;
    margin: -8px 0 0 19px;
}

.subtree {
    position: relative;
    margin-left: 40px;
    padding-left: 28px;
    padding-top: 40px;
}

.subtree::before {
    content: "";
    position: absolute;
    left: 0;
    top: 0;
    bottom: 30px;
    border-left: 3px dotted #d6d9e2;
}

.sub-label {
    height: 30px;
    line-height: 30px;
    font-size: 23px;
    font-weight: 300;
    color: #535f7b;
    margin-bottom: 18px;
}

.time-label {
    margin-top: 47px;
}

.box-sub {
    width: 264px;
    justify-content: space-between;
    padding-right: 12px;
}

.box-sub.tick::before {
    left: -30px;
    width: 26px;
}

.box-icon {
    width: 42px;
    height: 42px;
}

.clock-icon {
    width: 28px;
    height: 28px;
    margin-right: 7px;
}

.add-field {
    height: 38px;
    margin-top: 48px;
    margin-left: 32px;
    display: flex;
    align-items: center;
    gap: 18px;
    font-size: 25.500px;
    font-weight: 300;
    color: #535f7b;
    position: relative;
}

.add-field::before {
    content: "";
    position: absolute;
    left: -62px;
    bottom: 12px;
    width: 27px;
    border-top: 3px dotted #d6d9e2;
}

.add-field svg {
    width: 28px;
    height: 28px;
}

.dialog-foot {
    flex: 1;
    display: flex;
    align-items: center;
    justify-content: flex-end;
    gap: 44px;
    padding: 0 43px 0 0;
    border-top: 2px solid #e8eaef;
    font-size: 25.500px;
    font-weight: 300;
    color: #535f7b;
}

.cancel {
    margin-top: -4px;
}

.save {
    width: 115px;
    height: 65px;
    margin-top: -4px;
    border-radius: 10px;
    background: #2655cc;
    color: #fff;
    display: flex;
    align-items: center;
    justify-content: center;
}
```
